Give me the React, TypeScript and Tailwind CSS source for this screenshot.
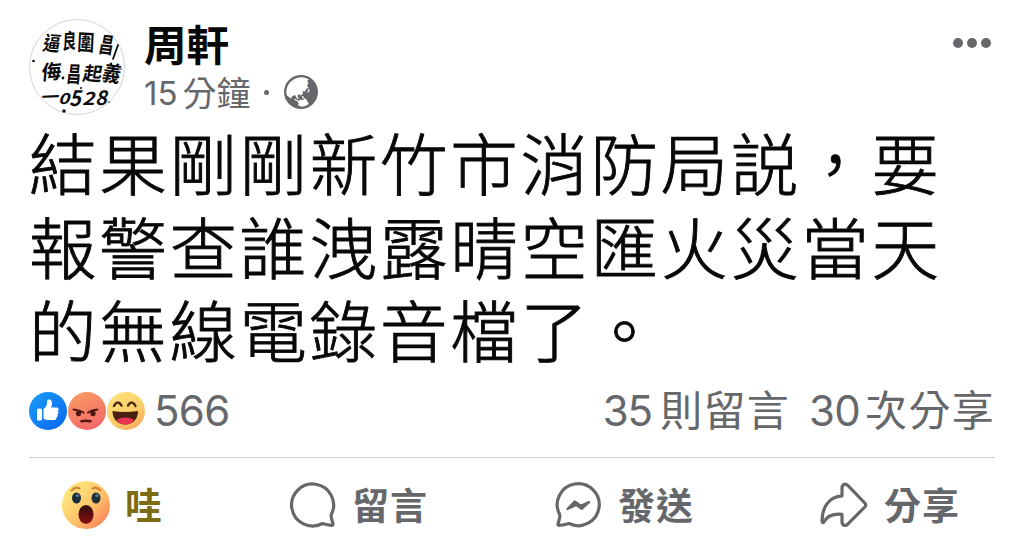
const cjk = "font-['Noto_Sans_CJK_TC',sans-serif]"

function Avatar() {
  return (
    <svg viewBox="0 0 96 96" className="h-24 w-24 shrink-0 font-['Noto_Sans_CJK_TC',sans-serif]" fill="#0b0b0b">
      <circle cx="48" cy="48" r="47.5" fill="#fff" stroke="#d4d4d6" strokeWidth="1" />
      <g fontSize="20" fontWeight="700">
        <text transform="translate(13 31) rotate(4) skewX(-8) scale(.85 1)">逼</text>
        <text transform="translate(33 30) rotate(-3) skewX(-6) scale(.7 1.05)">良</text>
        <text transform="translate(48 31) rotate(3) scale(.85 1.1)">圍</text>
        <text transform="translate(69 33) rotate(7) skewX(-4) scale(.72 1.1)">昌</text>
        <text transform="translate(12 61) rotate(-5) skewX(-10) scale(1 1)">侮</text>
        <text transform="translate(37 63) rotate(2) skewX(-4) scale(.72 1.1)">昌</text>
        <text transform="translate(53 61) rotate(3) skewX(-8) scale(.95 .95)">起</text>
        <text transform="translate(72 61) rotate(8) skewX(-6) scale(.9 1.1)">義</text>
      </g>
      <g fontSize="20" fontWeight="700" fontStyle="italic">
        <text transform="translate(11 84) rotate(-2) scale(.9 .8)">一</text>
        <text transform="translate(29 85) scale(.95 .75)">0</text>
        <text transform="translate(40 87) scale(1 1.1)">5</text>
        <text transform="translate(53 86) scale(1.05 .9)">2</text>
        <text transform="translate(66 86) scale(1 1)">8</text>
      </g>
      <path d="M89 26 L84 40" stroke="#0b0b0b" strokeWidth="1.8" strokeLinecap="round" />
      <circle cx="4.500" cy="42" r="1.300" />
      <circle cx="34" cy="59" r="1.400" />
      <circle cx="35" cy="92" r="1.700" />
      <circle cx="52" cy="69" r="1" />
      <circle cx="92" cy="50" r=".8" />
      <circle cx="80" cy="83" r=".8" />
    </svg>
  )
}

function Globe() {
  return (
    <svg viewBox="0 0 34 34" className="h-[34px] w-[34px]">
      <circle cx="17" cy="17" r="17" fill="#65676b" />
      <path
        d="M17 2.200c3-.2 6 .8 8 2.300l-2 1.500 1.500 1.800-1.500 3 1.500 2.200-2.500 1-1 2.500-2.500-.5.5 2.500-2.500 2-2-1.500-1 2 1.500 3-2-.5-2-3.500-2.500 1-1.500 2.500-2-1.500L2.600 20C1 10.500 7.500 2.800 17 2.200z"
        fill="#fff"
      />
      <path d="M13.500 27l3-2.500 2.500.5 2-2 2 2.500 1.800 3.500c-2.300 1.700-5 2.700-8 2.600l-3.300-1.600 1.500-1z" fill="#fff" />
      <path d="M11 24.500l3 1.500M18.500 21.500l1 1.500M25 14.500l-1 2.500" stroke="#fff" strokeWidth="1.300" strokeLinecap="round" />
    </svg>
  )
}

function LikeFace() {
  return (
    <svg viewBox="0 0 38 38" className="h-[38px] w-[38px]">
      <defs>
        <linearGradient id="like" x1="0" y1="0" x2="1" y2="1">
          <stop offset="0" stopColor="#1b9dfa" />
          <stop offset="1" stopColor="#0866ed" />
        </linearGradient>
      </defs>
      <circle cx="19" cy="19" r="19" fill="url(#like)" />
      <rect x="8" y="16.500" width="5" height="12" rx="1.500" fill="#fff" />
      <path
        d="M14.500 17c2-1 3.500-4 3.500-6.500 0-2 .6-3 2-3 2.200 0 3 2 3 4.200 0 1.500-.4 2.700-.8 3.800h5.500c2 0 2.600 2.600 1 3.500 1.200 1 .9 2.700-.4 3.300.9 1.200.4 2.500-.8 3 .4 1.500-.5 2.700-2.300 2.700h-5.200c-2 0-3.600-.4-5.500-1.300z"
        fill="#fff"
      />
    </svg>
  )
}

function AngryFace() {
  return (
    <svg viewBox="0 0 38 38" className="h-[38px] w-[38px]">
      <defs>
        <linearGradient id="angry" x1="0.300" y1="0" x2="0.700" y2="1">
          <stop offset="0" stopColor="#f79a62" />
          <stop offset="1" stopColor="#f4666c" />
        </linearGradient>
      </defs>
      <circle cx="19" cy="19" r="19" fill="url(#angry)" />
      <path d="M5.500 17.500Q11 18 15.500 20.500M29.500 17.500Q24 18 20 20.500" stroke="#4f1712" strokeWidth="2" fill="none" strokeLinecap="round" />
      <ellipse cx="10.500" cy="21.500" rx="2.600" ry="2.800" fill="#4f1712" />
      <ellipse cx="25" cy="21.500" rx="2.600" ry="2.800" fill="#4f1712" />
      <path d="M13.500 29.300q4.500-1 9 0" stroke="#4f1712" strokeWidth="2.600" fill="none" strokeLinecap="round" />
    </svg>
  )
}

function HahaFace() {
  return (
    <svg viewBox="0 0 38 38" className="h-[38px] w-[38px]">
      <defs>
        <linearGradient id="haha" x1="0.200" y1="0" x2="0.800" y2="1">
          <stop offset="0" stopColor="#ffe27a" />
          <stop offset=".6" stopColor="#fbcd68" />
          <stop offset="1" stopColor="#f6a85c" />
        </linearGradient>
      </defs>
      <circle cx="19" cy="19" r="19" fill="url(#haha)" />
      <path d="M7 14q3.500-6.500 7.500-.500M21 13.500q4-6 7.500.500" stroke="#4a2b12" strokeWidth="2.500" fill="none" strokeLinecap="round" />
      <path d="M5.500 19q12.500 2 25.500 0c0 8-5 13.500-12.700 13.500S5.500 27 5.500 19z" fill="#4b2212" />
      <path d="M9.500 28c4.500-3.500 13-3.500 17.500 0-2.200 3-5 4.500-8.700 4.500S11.700 31 9.500 28z" fill="#ee3453" />
    </svg>
  )
}

function WowFace() {
  return (
    <svg viewBox="0 0 48 48" className="h-12 w-12">
      <defs>
        <linearGradient id="wow" x1="0.200" y1="0.200" x2="0.900" y2="0.900">
          <stop offset="0" stopColor="#ffe27b" />
          <stop offset=".5" stopColor="#fdc56a" />
          <stop offset="1" stopColor="#f98158" />
        </linearGradient>
        <linearGradient id="mouth" x1="0" y1="0" x2="0" y2="1">
          <stop offset="0" stopColor="#2f0c0c" />
          <stop offset="1" stopColor="#8d1010" />
        </linearGradient>
      </defs>
      <circle cx="24" cy="24" r="24" fill="url(#wow)" />
      <path d="M9.500 9.500q4-4.500 8-2M30.500 7.500q4-2.500 8 2" stroke="#d9823a" strokeWidth="2" fill="none" strokeLinecap="round" />
      <ellipse cx="14.500" cy="17" rx="4.500" ry="5.500" fill="#1e2f3c" />
      <ellipse cx="34" cy="17" rx="4.500" ry="5.500" fill="#1e2f3c" />
      <ellipse cx="15.500" cy="14.500" rx="1.800" ry="1.500" fill="#53768d" />
      <ellipse cx="35" cy="14.500" rx="1.800" ry="1.500" fill="#53768d" />
      <ellipse cx="24" cy="33.500" rx="7.500" ry="9.500" fill="url(#mouth)" />
    </svg>
  )
}

function CommentIcon() {
  return (
    <svg viewBox="0 0 48 48" className="h-12 w-12" fill="none" stroke="#65676b" strokeWidth="3.200" strokeLinejoin="round">
      <path d="M42.300 33.500A21 21 0 1 0 33.500 42.500c2.600.8 6 1.600 9.200 1.800 1 0 1.500-.6 1.300-1.500-.7-3.200-2.400-5.900-1.700-9.300z" />
    </svg>
  )
}

function MessengerIcon() {
  return (
    <svg viewBox="0 0 48 48" className="h-12 w-12" fill="none" stroke="#65676b" strokeWidth="3.200" strokeLinejoin="round">
      <path d="M4.700 33.500A21 21 0 1 1 14 42.500c-2.600.8-6 1.600-9.700 1.800-1 0-1.500-.6-1.300-1.500.7-3.200 2.400-5.900 1.700-9.300z" />
      <path d="M12.500 28l7.200-7.500 6 4.300 8.300-3.600-7.200 6.500-5.800-3.900z" fill="#65676b" strokeWidth="2.400" />
    </svg>
  )
}

function ShareIcon() {
  return (
    <svg viewBox="0 0 48 48" className="h-12 w-12" fill="none" stroke="#65676b" strokeWidth="3.200" strokeLinejoin="round">
      <path d="M22 14.800V7c0-3.600 3.200-5 5.800-2.600l17 17.600c1.300 1.400 1.300 2.600 0 4L27.800 43.200C25.200 45.600 22 44.300 22 40.700V33.300c-8.500-.8-14.500 1.200-17.800 7.200-.7 1.600-2.200 1.400-2.200-.5C2 27 8.500 15.600 22 14.800z" />
    </svg>
  )
}

export default function App() {
  return (
    <div className={`h-[552px] w-[1024px] overflow-hidden bg-white pl-[29px] pr-[29px] pt-[19px] ${cjk}`}>
      {/* Post header */}
      <header className="flex h-24 items-start">
        <Avatar />
        <div className="-mt-px ml-[19px] flex flex-col">
          <h1 className="h-[52px] text-[42.500px] leading-[49px] font-bold text-[#080809]">周軒</h1>
          <div className="flex h-11 items-center text-[34px] leading-[44px] text-[#65676b]">
            <span className="mt-[2px] mr-[5px] font-['Inter',sans-serif] text-[33px] tracking-[0px]">15</span>
            <span>分鐘</span>
            <span className="mr-[15px] ml-[14px] h-[5px] w-[5px] rounded-full bg-[#65676b]" />
            <Globe />
          </div>
        </div>
        <button className="mt-[19px] mr-[4px] ml-auto flex gap-[4px]">
          <span className="h-[10px] w-[10px] rounded-full bg-[#65676b]" />
          <span className="h-[10px] w-[10px] rounded-full bg-[#65676b]" />
          <span className="h-[10px] w-[10px] rounded-full bg-[#65676b]" />
        </button>
      </header>

      {/* Post text */}
      <p className="mt-[4px] h-[252px] text-[67.500px] leading-[83.500px] font-light tracking-[2.700px] whitespace-nowrap text-[#080809] [-webkit-text-stroke:0.9px_#080809]">
        結果剛剛新竹市消防局説，要
        <br />
        報警查誰洩露晴空匯火災當天
        <br />
        的無線電錄音檔了。
      </p>

      {/* Reactions and counters */}
      <div className="mt-[15px] flex h-[50px] items-center text-[42px] leading-[50px] text-[#65676b]">
        <div className="flex gap-px">
          <LikeFace />
          <AngryFace />
          <HahaFace />
        </div>
        <span className="ml-[9px] font-['Inter',sans-serif] tracking-[-0.700px]">566</span>
        <div className="-mt-[3px] ml-auto flex tracking-[1.300px]">
          <span className="mt-[3px] font-['Inter',sans-serif] tracking-[-1px]">35</span>
          <span className="ml-[8px]">則留言</span>
          <span className="mt-[3px] ml-[19px] font-['Inter',sans-serif] tracking-[-0.700px]">30</span>
          <span className="ml-[5px]">次分享</span>
        </div>
      </div>

      <hr className="mt-[21px] border-[#ced0d4]" />

      {/* Actions */}
      <div className="mt-[23px] flex h-12 items-center text-[37px] leading-[46px] font-bold text-[#65676b]">
        <button className="ml-[33px] flex w-[227px] items-center gap-[15px] text-[#7d6c12]">
          <WowFace />
          <span className="-mt-[3px]">哇</span>
        </button>
        <button className="flex w-[266px] items-center gap-[15px] tracking-[1px]">
          <CommentIcon />
          <span className="-mt-[3px]">留言</span>
        </button>
        <button className="flex w-[265px] items-center gap-[15px] tracking-[1px]">
          <MessengerIcon />
          <span className="-mt-[3px]">發送</span>
        </button>
        <button className="flex items-center gap-[16px] tracking-[1px]">
          <ShareIcon />
          <span className="-mt-[3px]">分享</span>
        </button>
      </div>
    </div>
  )
}
